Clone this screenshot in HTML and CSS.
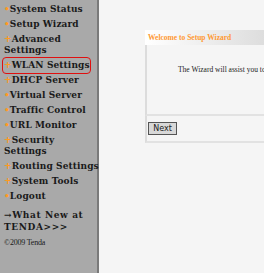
FILE: index.html
```html
<!DOCTYPE html>
<html lang="en">
<head>
    <meta charset="UTF-8">
    <title>Setup Wizard</title>
    <link rel="stylesheet" href="styles.css">
</head>
<body>
    <div class="menu">
        <a class="item dot" href="#">System Status</a>
        <a class="item dot" href="#">Setup Wizard</a>
        <a class="item plus" href="#">Advanced<br>Settings</a>
        <a class="item plus active" href="#">WLAN Settings</a>
        <a class="item plus" href="#">DHCP Server</a>
        <a class="item dot" href="#">Virtual Server</a>
        <a class="item dot" href="#">Traffic Control</a>
        <a class="item dot" href="#">URL Monitor</a>
        <a class="item plus" href="#">Security<br>Settings</a>
        <a class="item plus" href="#">Routing Settings</a>
        <a class="item plus" href="#">System Tools</a>
        <a class="item dot" href="#">Logout</a>
        <a class="news" href="#">&rarr;What New at TENDA&gt;&gt;&gt;</a>
        <div class="copy">&copy;2009 Tenda</div>
    </div>

    <div class="main">
        <div class="panel">
            <div class="panel-head">Welcome to Setup Wizard</div>
            <div class="panel-body">
                <p>The Wizard will assist you to configure the basic settings within a few minutes.</p>
            </div>
            <div class="panel-foot">
                <button>Next</button>
            </div>
        </div>
    </div>
</body>
</html>
```

FILE: styles.css
```css
html, body {
    margin: 0;
    padding: 0;
    height: 100%;
}
body {
    display: flex;
    background-color: #f5f5f5;
    font-family: "DejaVu Serif", serif;
    overflow: hidden;
}
.menu {
    width: 93px;
    flex-shrink: 0;
    background-color: #a9a9a9;
    border-right: 2px solid #7a7a7a;
    padding: 4px 0 0 4px;
}
.item {
    display: block;
    position: relative;
    color: #1a1a1a;
    font-size: 9px;
    font-weight: bold;
    letter-spacing: 0.1px;
    line-height: 11px;
    text-decoration: none;
    margin-bottom: 4px;
    width: 97px;
}
.item::before {
    color: #ff9a1f;
    font-weight: bold;
}
.dot::before {
    content: "\2022";
}
.plus::before {
    content: "+";
}
.active::after {
    content: "";
    position: absolute;
    left: -2px;
    top: -3px;
    width: 87px;
    height: 15px;
    border: 1px solid #e01010;
    border-radius: 4px;
}
.news {
    display: block;
    color: #1a1a1a;
    font-size: 9px;
    font-weight: bold;
    letter-spacing: 0.6px;
    line-height: 12px;
    text-decoration: none;
    margin-top: 7px;
    width: 88px;
}
.copy {
    font-family: "Liberation Serif", serif;
    font-size: 8px;
    letter-spacing: -0.2px;
    color: #1a1a1a;
    margin-top: 5px;
}
.main {
    flex: 1;
    padding: 30px 0 0 46px;
    min-width: 0;
}
.panel {
    width: 420px;
    font-family: "Liberation Serif", serif;
}
.panel-head {
    height: 15px;
    line-height: 15px;
    padding-left: 3px;
    color: #ff9933;
    font-size: 7.5px;
    font-weight: bold;
    background: linear-gradient(to right, #ffffff, #dddddd 120px);
}
.panel-body {
    border-left: 2px solid #dcdcdc;
    border-bottom: 2px solid #e2e2e2;
    height: 71px;
    padding: 19px 0 0 31px;
    box-sizing: border-box;
}
.panel-body p {
    margin: 0;
    width: 250px;
    font-size: 7.5px;
    line-height: 11px;
    color: #222;
}
.panel-foot {
    display: flex;
    align-items: flex-start;
    border-left: 2px solid #dcdcdc;
    border-bottom: 2px solid #e2e2e2;
    height: 27px;
    padding: 6px 0 0 1px;
    box-sizing: border-box;
}
.panel-foot button {
    font-family: "DejaVu Sans", sans-serif;
    font-size: 8px;
    line-height: 10px;
    padding: 0 3px;
    height: 13px;
    width: 29px;
    background: #d8d8d8;
    border: 1px solid #555;
    color: #222;
}
```
